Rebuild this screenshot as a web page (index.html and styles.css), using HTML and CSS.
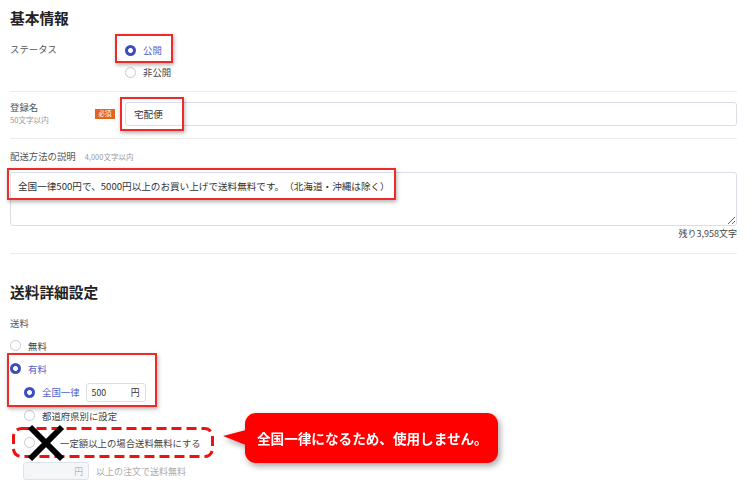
FILE: index.html
```html
<!DOCTYPE html>
<html lang="ja">
<head>
<meta charset="utf-8">
<title>配送方法</title>
<link rel="stylesheet" href="styles.css">
</head>
<body>
<div class="page">
  <section class="sec first">
    <h2 class="title">基本情報</h2>
    <div class="grid status">
      <div class="lbl"><span class="name">ステータス</span></div>
      <div class="opts">
        <div class="opt on"><span class="radio checked"></span>公開</div>
        <div class="opt"><span class="radio"></span>非公開</div>
      </div>
    </div>
  </section>

  <section class="sec name-sec">
    <div class="grid">
      <div class="lbl">
        <div>
          <div class="name">登録名</div>
          <div class="sub">50文字以内</div>
        </div>
        <span class="badge">必須</span>
      </div>
      <input class="text" type="text" value="宅配便">
    </div>
  </section>

  <section class="sec desc">
    <div class="desc-head"><span class="name">配送方法の説明</span><span class="sub">4,000文字以内</span></div>
    <textarea class="area">全国一律500円で、5000円以上のお買い上げで送料無料です。（北海道・沖縄は除く）</textarea>
    <div class="count">残り3,958文字</div>
  </section>

  <section class="sec fee">
    <h2 class="title">送料詳細設定</h2>
    <div class="name fee-lbl">送料</div>
    <div class="fee-opts">
      <div class="opt lvl1"><span class="radio"></span>無料</div>
      <div class="opt lvl1 on"><span class="radio checked"></span>有料</div>
      <div class="opt lvl2 on tall"><span class="radio checked"></span>全国一律
        <div class="money"><span>500</span><span>円</span></div>
      </div>
      <div class="opt lvl2"><span class="radio"></span>都道府県別に設定</div>
      <div class="opt lvl2 free"><span class="radio"></span>一定額以上の場合送料無料にする</div>
      <div class="cond">
        <div class="money disabled"><span></span><span>円</span></div>
        <span class="cond-text">以上の注文で送料無料</span>
      </div>
    </div>
  </section>

  <div class="mark m1"></div>
  <div class="mark m2"></div>
  <div class="mark m3"></div>
  <div class="mark m4"></div>

  <svg class="dash" width="202" height="31" viewBox="0 0 202 31"><rect x="1.5" y="1.5" width="199" height="28" rx="8" ry="8" fill="none" stroke="#f01010" stroke-width="3" stroke-dasharray="10 5"/></svg>
  <svg class="cross" width="42" height="40" viewBox="0 0 42 40"><path d="M5 4 L37 36 M37 4 L5 36" stroke="#000" stroke-width="6" stroke-linecap="butt" fill="none"/></svg>

  <div class="callout">全国一律になるため、使用しません。</div>
</div>
</body>
</html>
```

FILE: styles.css
```css
* { box-sizing: border-box; }
html, body { margin: 0; background: #fff; }
body {
  font-family: "Noto Sans CJK JP", "Noto Sans", sans-serif;
  color: #444;
  text-spacing-trim: space-all;
}
.page {
  position: relative;
  padding: 0 16px 0 10px;
  height: 489px;
  overflow: hidden;
}
.title {
  margin: 0;
  font-size: 14.7px;
  font-weight: 700;
  line-height: 20px;
  color: #222;
}
.sec + .sec { border-top: 1px solid #ececec; }
.first { padding: 8px 0 8px; }
.grid {
  display: grid;
  grid-template-columns: 115px 1fr;
}
.status { margin-top: 11px; }
.lbl {
  display: flex;
  justify-content: space-between;
  align-items: flex-start;
  padding-right: 10px;
}
.name {
  font-size: 9.4px;
  line-height: 14px;
  color: #555;
}
.status .name { line-height: 20px; }
.sub {
  font-size: 7.6px;
  line-height: 12px;
  color: #999;
}
.badge {
  margin-top: 9px;
  width: 20px;
  height: 10px;
  background: #e5641c;
  color: #fff;
  font-size: 6.4px;
  line-height: 10px;
  text-align: center;
}
.opts { display: flex; flex-direction: column; }
.opt {
  display: flex;
  align-items: center;
  height: 22px;
  font-size: 9.4px;
  color: #444;
}
.opt.on { color: #5060c8; }
.radio {
  width: 11px;
  height: 11px;
  border-radius: 50%;
  border: 1px solid #c6cad6;
  background: #fff;
  margin-right: 7px;
  flex: none;
}
.radio.checked {
  border: none;
  background: radial-gradient(circle, #fff 0 2.1px, #3d4fbf 2.7px);
}
.name-sec { padding: 8px 0 12px; }
.text {
  margin: 2px 0 0;
  height: 24px;
  border: 1px solid #d9dee7;
  border-radius: 3px;
  padding: 0 8px;
  font-family: inherit;
  font-size: 9.6px;
  color: #333;
  outline: none;
  width: 100%;
}
.desc { padding: 10px 0 13px; }
.desc-head { display: flex; align-items: baseline; gap: 9px; }
.desc-head .sub { font-size: 7.5px; }
.area {
  display: block;
  margin-top: 9px;
  width: 100%;
  height: 54px;
  border: 1px solid #d9dee7;
  border-radius: 3px;
  padding: 6px 7px;
  font-family: inherit;
  font-size: 9.6px;
  line-height: 14px;
  color: #333;
  resize: vertical;
  outline: none;
  text-spacing-trim: space-all;
}
.count {
  margin-top: 2px;
  text-align: right;
  font-size: 9px;
  line-height: 12px;
  color: #444;
}
.fee .title { margin-top: 28px; }
.fee-lbl { margin-top: 14px; }
.fee-opts { margin-top: 4px; display: flex; flex-direction: column; }
.opt.lvl1 { height: 23px; padding-left: 0; }
.opt.lvl2 { height: 23px; padding-left: 14px; }
.opt.tall { height: 24px; }
.opt.free { margin-top: 4px; }
.opt.free .radio { margin-right: 25px; }
.money {
  display: flex;
  justify-content: space-between;
  align-items: center;
  margin-left: 6px;
  width: 60px;
  height: 19px;
  border: 1px solid #d9dee7;
  border-radius: 3px;
  padding: 0 5px;
  font-size: 8.8px;
  color: #333;
  background: #fff;
}
.cond {
  display: flex;
  align-items: center;
  margin-top: 8px;
  padding-left: 13px;
}
.money.disabled {
  margin-left: 0;
  width: 66px;
  height: 18px;
  background: #f5f6f8;
  border-color: #dfe2e8;
  color: #b8b8b8;
}
.cond-text {
  margin-left: 7px;
  font-size: 9px;
  color: #aaa;
}
.mark {
  position: absolute;
  border: 2px solid #ee2b2b;
  box-shadow: 1px 2px 4px rgba(0,0,0,.3);
}
.m1 { left: 115px; top: 34px; width: 58px; height: 29px; }
.m2 { left: 120px; top: 97px; width: 64px; height: 34px; }
.m3 { left: 7px; top: 168px; width: 389px; height: 32px; }
.m4 { left: 7px; top: 353px; width: 150px; height: 54px; }
.dash { position: absolute; left: 12px; top: 427px; }
.cross { position: absolute; left: 25px; top: 423px; }
.callout {
  position: absolute;
  left: 245px;
  top: 413px;
  width: 253px;
  height: 50px;
  background: #ff0000;
  border-radius: 11px;
  color: #fff;
  font-weight: 700;
  font-size: 13.6px;
  line-height: 50px;
  padding-left: 12px;
  filter: drop-shadow(2px 3px 3px rgba(0,0,0,.35));
}
.callout::before {
  content: "";
  position: absolute;
  left: -22px;
  top: 17px;
  width: 23px;
  height: 15px;
  background: #ff0000;
  clip-path: polygon(0 40%, 100% 0, 100% 100%);
}
```
